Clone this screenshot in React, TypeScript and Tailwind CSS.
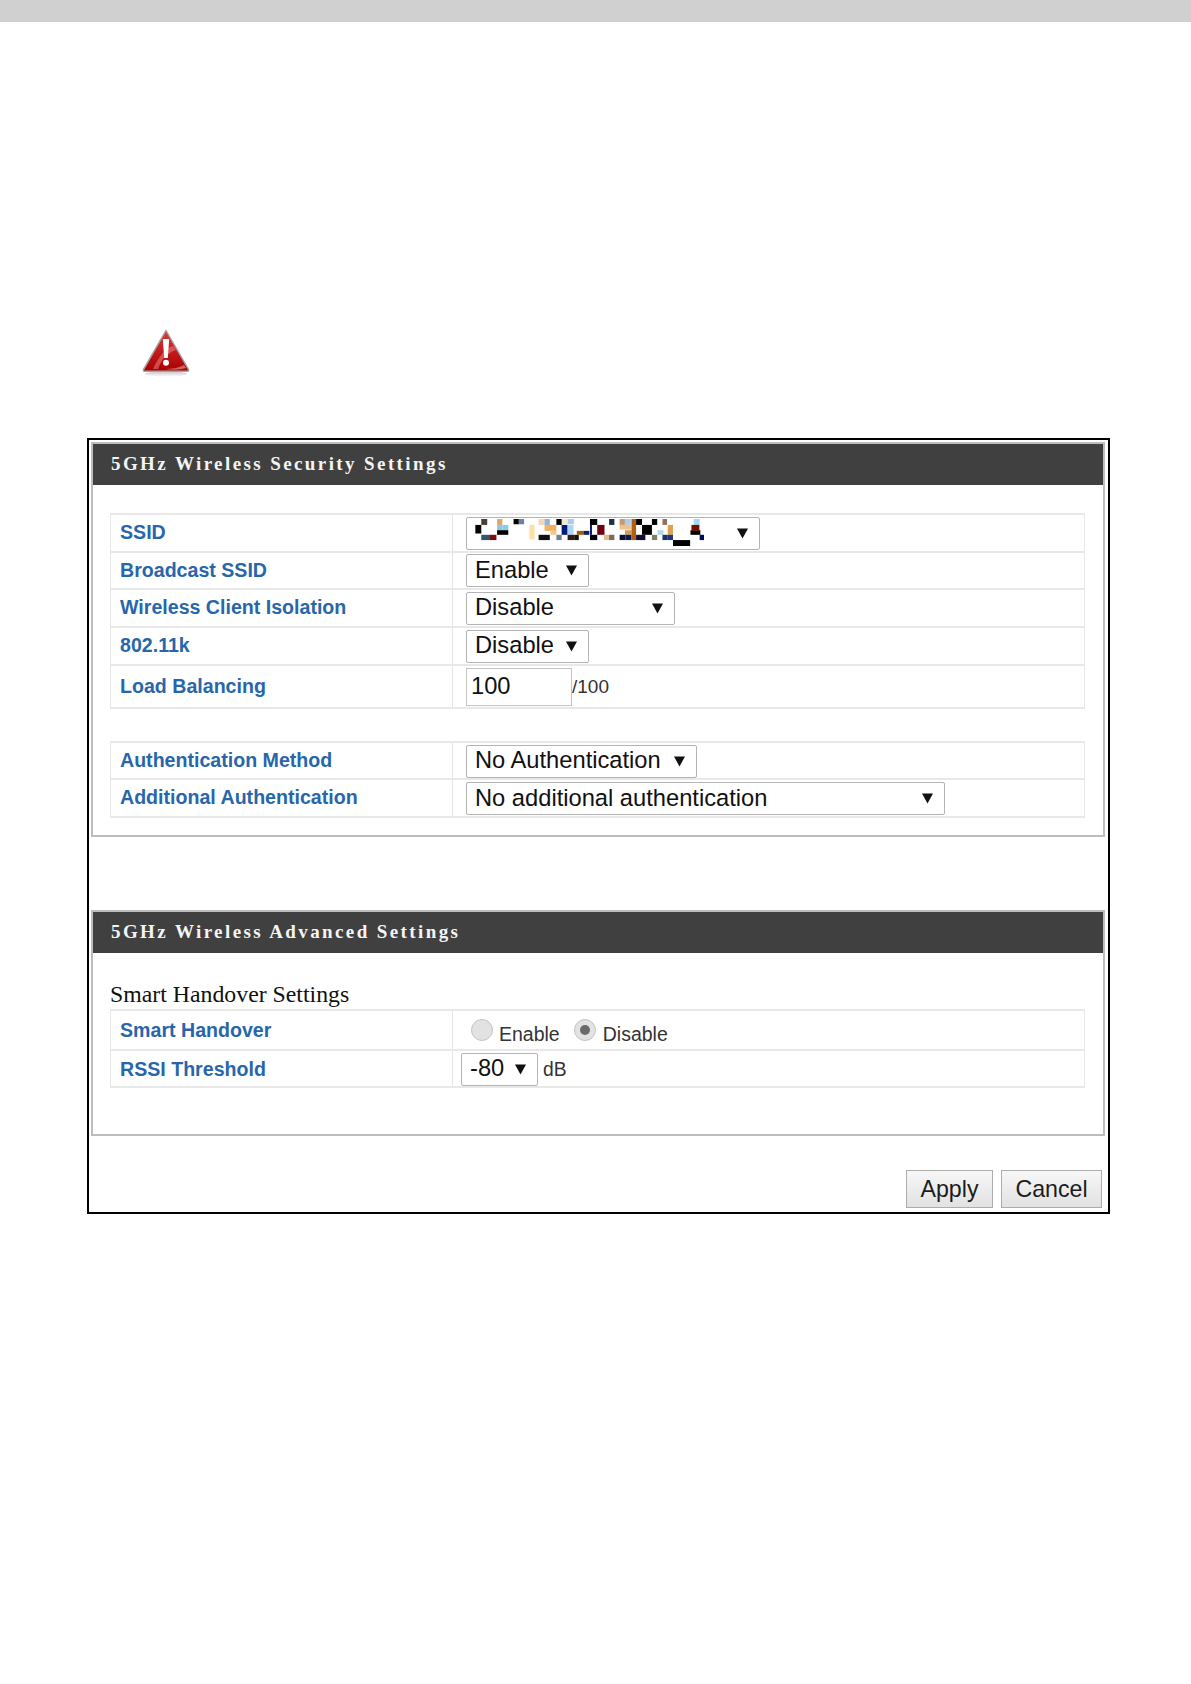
const sans = "font-['Liberation_Sans',Arial,sans-serif]";
const serif = "font-['Liberation_Serif','Times_New_Roman',serif]";

const Arrow = () => (
    <svg width="11" height="11" viewBox="0 0 11 11" className="shrink-0">
        <path d="M0 0.5h11L5.5 10.5z" fill="#111" />
    </svg>
);

const Select = ({ label, className, children }: { label?: string; className: string; children?: React.ReactNode }) => (
    <div className={`flex items-center justify-between rounded-[2px] border border-[#b4b4b4] bg-white pl-[8px] pr-[11px] text-[23.7px] text-[#111] ${className}`}>
        {label && <span>{label}</span>}
        {children}
        <Arrow />
    </div>
);

const pixels: [number, number, number, number, string][] = [
    [30, 14, 18, 18, "#4a3f30"], [12, 32, 18, 26, "#000"], [30, 62, 24, 16, "#33566e"], [54, 62, 22, 16, "#7a0f10"],
    [78, 14, 16, 18, "#e0a860"], [78, 32, 16, 16, "#8dc8ea"], [94, 32, 18, 16, "#7fd0f0"], [78, 48, 34, 14, "#000"],
    [128, 14, 16, 16, "#000"], [144, 14, 16, 16, "#6f80b0"], [176, 32, 16, 44, "#fde0a8"],
    [204, 14, 18, 18, "#f5d8b0"], [222, 14, 16, 18, "#8fb5d8"], [258, 14, 16, 18, "#000"], [275, 14, 18, 16, "#f0e8d0"], [293, 14, 18, 16, "#a8cbe8"],
    [222, 32, 36, 18, "#f0b060"], [240, 50, 18, 12, "#f5c888"], [204, 62, 34, 16, "#111"], [258, 62, 16, 16, "#708090"],
    [274, 32, 18, 30, "#001a7a"], [292, 32, 18, 30, "#a8d8f8"], [292, 62, 20, 16, "#3a1a10"], [312, 62, 14, 16, "#111"],
    [320, 50, 20, 12, "#a85a10"], [340, 50, 18, 12, "#102060"],
    [360, 14, 22, 18, "#000"], [360, 32, 6, 30, "#001a80"], [382, 32, 22, 30, "#700010"], [360, 62, 22, 16, "#000"],
    [418, 14, 16, 18, "#203040"], [402, 62, 16, 16, "#e0c090"], [418, 62, 16, 16, "#806858"],
    [450, 14, 16, 18, "#c89870"], [466, 14, 18, 18, "#a8d0e8"], [450, 32, 34, 14, "#f0c088"], [466, 48, 20, 14, "#d0a060"],
    [450, 62, 18, 16, "#0a1030"], [468, 62, 18, 16, "#0a1a50"], [486, 14, 14, 64, "#b06010"],
    [500, 14, 18, 18, "#000"], [518, 32, 30, 30, "#000"], [500, 62, 28, 16, "#101030"],
    [548, 14, 16, 18, "#000"], [580, 14, 14, 18, "#907060"], [548, 62, 16, 16, "#808070"], [565, 48, 18, 14, "#b0d8f0"],
    [580, 62, 16, 16, "#203060"], [596, 32, 16, 30, "#e0a050"], [596, 62, 16, 16, "#1a3a80"],
    [612, 78, 52, 18, "#000"], [665, 48, 30, 14, "#000"], [675, 14, 18, 18, "#a0d8f8"], [668, 32, 24, 18, "#701000"], [693, 62, 16, 16, "#000a60"],
];

const Warning = () => (
    <svg width="48" height="48" viewBox="0 0 48 48" className="block">
        <defs>
            <linearGradient id="red" x1="0" y1="0" x2="0" y2="1">
                <stop offset="0" stopColor="#dc3a3a" />
                <stop offset="1" stopColor="#a80000" />
            </linearGradient>
            <linearGradient id="shade" x1="0" y1="0" x2="0" y2="1">
                <stop offset="0" stopColor="#c4c4c4" />
                <stop offset="1" stopColor="#ffffff" />
            </linearGradient>
        </defs>
        <ellipse cx="24" cy="45" rx="21" ry="2.800" fill="url(#shade)" />
        <path d="M24 1.500L46.500 40.500a1.200 1.200 0 0 1-1 1.800H2.500a1.200 1.200 0 0 1-1-1.800z" fill="url(#red)" stroke="#a8a0a0" strokeWidth="1.500" strokeLinejoin="round" />
        <path d="M31 17c-7 2-14 10-20 23h5c3-9 9-16 18-19z" fill="#ee8080" opacity="0.55" />
        <path d="M42 36c-6 3-12 4-19 4 7 1 14 1 21-1z" fill="#f0a0a0" opacity="0.6" />
        <path d="M20.800 10h6.400l-1.400 19h-3.600z" fill="#fff" />
        <circle cx="24" cy="33.800" r="3" fill="#fff" />
    </svg>
);

const Row = ({ label, className, labelClassName, children }: { label: string; className: string; labelClassName?: string; children: React.ReactNode }) => (
    <div className={`flex border-b-2 border-[#e8e8e8] ${className}`}>
        <div className="flex w-[342px] shrink-0 items-center border-r border-[#e4e4e4] pl-[9px] text-[19.6px] font-bold text-[#2866ab]">
            <span className={labelClassName}>{label}</span>
        </div>
        <div className="flex flex-1 items-center">{children}</div>
    </div>
);

const Table = ({ children }: { children: React.ReactNode }) => (
    <div className="border-x border-t-2 border-[#e8e8e8]">{children}</div>
);

const Header = ({ title }: { title: string }) => (
    <div className={`flex h-[41px] items-center bg-[#404040] pl-[18px] text-[19px] font-bold tracking-[2.4px] text-[#f4f4f4] ${serif}`}>
        {title}
    </div>
);

const Radio = ({ checked }: { checked?: boolean }) => (
    <span className="flex h-[22px] w-[22px] items-center justify-center rounded-full border border-[#c4c4c4] bg-[#e2e2e2]">
        {checked && <span className="h-[10px] w-[10px] rounded-full bg-[#6a6a6a]" />}
    </span>
);

const Button = ({ label, className }: { label: string; className: string }) => (
    <div className={`flex h-[38px] items-center justify-center border border-[#adadad] bg-gradient-to-b from-[#f7f7f7] to-[#e2e2e2] text-[23.2px] text-[#1c1c1c] ${className}`}>
        {label}
    </div>
);

const App = () => {
    return (
        <div className={`h-[1684px] bg-white ${sans}`}>
            <div className="h-[22px] bg-[#d0d0d0]" />
            <div className="ml-[142px] mt-[307px]">
                <Warning />
            </div>
            <div className="ml-[87px] mt-[61px] h-[776px] w-[1023px] border-2 border-black py-[2px] pl-[2px] pr-[3px]">
                <div className="h-[395px] border-2 border-[#bdbdbd]">
                    <Header title="5GHz Wireless Security Settings" />
                    <div className="ml-[17px] mr-[18px] mt-[28px]">
                        <Table>
                            <Row label="SSID" className="h-[38px]">
                                <Select className="ml-[13px] h-[33px] w-[294px]">
                                    <svg width="230" height="28" viewBox="12 14 690 85" className="-ml-[1px] block">
                                        {pixels.map(([x, y, w, h, c], i) => (
                                            <rect key={i} x={x} y={y} width={w} height={h} fill={c} />
                                        ))}
                                    </svg>
                                </Select>
                            </Row>
                            <Row label="Broadcast SSID" className="h-[37px]">
                                <Select label="Enable" className="ml-[13px] h-[33px] w-[123px]" />
                            </Row>
                            <Row label="Wireless Client Isolation" className="h-[38px]">
                                <Select label="Disable" className="ml-[13px] h-[33px] w-[209px]" />
                            </Row>
                            <Row label="802.11k" className="h-[38px]">
                                <Select label="Disable" className="ml-[13px] h-[33px] w-[123px]" />
                            </Row>
                            <Row label="Load Balancing" className="h-[43px]">
                                <div className="ml-[13px] flex h-[38px] w-[106px] items-center border border-[#c4c4c4] pl-[4px] text-[23.7px] text-[#111]">
                                    100
                                </div>
                                <span className="mt-[2px] text-[19px] text-[#333]">/100</span>
                            </Row>
                        </Table>
                        <div className="mt-[32px]">
                            <Table>
                                <Row label="Authentication Method" className="h-[37px]">
                                    <Select label="No Authentication" className="ml-[13px] mt-[1px] h-[33px] w-[231px]" />
                                </Row>
                                <Row label="Additional Authentication" className="h-[38px]">
                                    <Select label="No additional authentication" className="ml-[13px] mt-[1px] h-[33px] w-[479px]" />
                                </Row>
                            </Table>
                        </div>
                    </div>
                </div>
                <div className="mt-[73px] h-[226px] border-2 border-[#bdbdbd]">
                    <Header title="5GHz Wireless Advanced Settings" />
                    <div className="ml-[17px] mr-[18px]">
                        <div className={`mt-[26px] h-[30px] text-[23.8px] leading-[30px] text-[#111] ${serif}`}>
                            Smart Handover Settings
                        </div>
                        <Table>
                            <Row label="Smart Handover" labelClassName="mt-[2px]" className="h-[40px]">
                                <div className="ml-[18px] flex items-center text-[19.5px] text-[#333]">
                                    <Radio />
                                    <span className="ml-[6px] mt-[10px]">Enable</span>
                                    <span className="ml-[14px]">
                                        <Radio checked />
                                    </span>
                                    <span className="ml-[7px] mt-[10px]">Disable</span>
                                </div>
                            </Row>
                            <Row label="RSSI Threshold" labelClassName="mt-[2px]" className="h-[37px]">
                                <Select label="-80" className="ml-[8px] mt-[1px] h-[33px] w-[77px]" />
                                <span className="ml-[5px] mt-[3px] text-[19.3px] text-[#333]">dB</span>
                            </Row>
                        </Table>
                    </div>
                </div>
                <div className="mr-[3px] mt-[34px] flex justify-end gap-[8px]">
                    <Button label="Apply" className="w-[87px]" />
                    <Button label="Cancel" className="w-[101px]" />
                </div>
            </div>
        </div>
    );
};

export default App;
